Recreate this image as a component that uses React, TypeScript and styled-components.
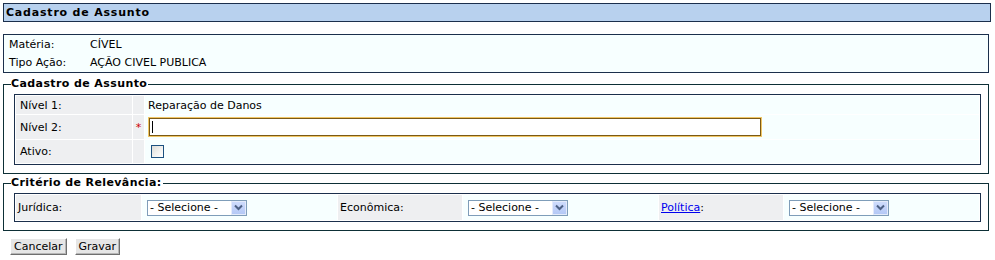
import React from 'react';
import styled, { createGlobalStyle } from 'styled-components';

const GlobalStyle = createGlobalStyle`
  body {
    margin: 0;
    background: #ffffff;
    font-family: 'DejaVu Sans', Verdana, sans-serif;
    font-size: 11px;
    color: #000000;
  }
`;

const Page = styled.div`
  padding: 3px 0 0 3px;
`;

const TitleBar = styled.div`
  box-sizing: border-box;
  width: 988px;
  height: 19px;
  border: 1px solid #1b2f4c;
  background: #b8d1ee;
  padding-left: 2px;
  font-weight: bold;
  letter-spacing: 0.8px;
  line-height: 17px;
`;

const InfoBox = styled.div`
  box-sizing: border-box;
  width: 986px;
  height: 39px;
  margin-top: 12px;
  border: 1px solid #1b2f4c;
  background: #f7ffff;
  padding-left: 5px;
  display: grid;
  grid-template-columns: 81px 1fr;
  grid-auto-rows: 18px;
  align-items: center;
`;

const FieldSet = styled.fieldset<{ $gap: number }>`
  box-sizing: border-box;
  width: 986px;
  margin: ${(p) => p.$gap}px 0 0 0;
  padding: 3px 7px 8px 10px;
  border: 1px solid #0d2f36;
  min-inline-size: 0;
`;

const Legend = styled.legend`
  margin-left: -3px;
  padding: 0 1px 0 0;
  font-weight: bold;
  letter-spacing: 0.4px;
  line-height: 14px;
`;

const FormTable = styled.div<{ $cols: string; $rows: string }>`
  display: grid;
  grid-template-columns: ${(p) => p.$cols};
  grid-template-rows: ${(p) => p.$rows};
  gap: 1px;
  padding: 1px;
  border: 1px solid #1b2f4c;
  background: #ffffff;
`;

const LabelCell = styled.div<{ $pad?: number }>`
  background: #eeeff1;
  display: flex;
  align-items: center;
  padding-left: ${(p) => p.$pad ?? 4}px;
`;

const MarkCell = styled.div`
  background: #eeeff1;
  color: #cc0000;
  display: flex;
  align-items: center;
  justify-content: center;
  padding-top: 1px;
`;

const ValueCell = styled.div<{ $pad?: number }>`
  background: #f7ffff;
  display: flex;
  align-items: center;
  padding-left: ${(p) => p.$pad ?? 3}px;
`;

const InputWrap = styled.span`
  position: relative;
  display: inline-flex;
  margin-left: 1px;
`;

const TextInput = styled.input`
  box-sizing: border-box;
  width: 612px;
  height: 18px;
  margin: 0;
  padding: 0 2px;
  border: 1px solid #7b5a16;
  box-shadow: 0 0 0 1px #f1c666;
  background: #ffffff;
  font: inherit;
  outline: none;
  caret-color: transparent;
`;

const Caret = styled.span`
  position: absolute;
  left: 3px;
  top: 3px;
  width: 1px;
  height: 12px;
  background: #000000;
  pointer-events: none;
`;

const CheckBox = styled.span`
  box-sizing: border-box;
  display: inline-block;
  width: 13px;
  height: 13px;
  margin-left: 3px;
  border: 1px solid #1c5180;
  background: linear-gradient(135deg, #dcdcd7 0%, #f4f4f2 60%, #ffffff 100%);
`;

const SelectBox = styled.div`
  box-sizing: border-box;
  width: 100px;
  height: 16px;
  margin-left: 2px;
  border: 1px solid #7f9db9;
  background: #ffffff;
  display: flex;
  align-items: center;
  justify-content: space-between;
  padding-left: 2px;
`;

const SelectArrow = styled.span`
  box-sizing: border-box;
  width: 15px;
  height: 14px;
  background: linear-gradient(#cedbfc, #b4c8f6);
  border: 1px solid #e4ebfb;
  display: flex;
  align-items: center;
  justify-content: center;
`;

const Link = styled.a`
  color: #0000ee;
  text-decoration: underline;
`;

const Buttons = styled.div`
  display: flex;
  gap: 8px;
  margin: 7px 0 0 7px;
`;

const Button = styled.button`
  box-sizing: border-box;
  height: 17px;
  padding: 0 3px;
  font: inherit;
  line-height: 13px;
  background: #e6e6e6;
  border: 1px solid;
  border-color: #ffffff #6f6f6f #6f6f6f #ffffff;
  box-shadow: inset -1px -1px 0 #b6b6b6;
  color: #000000;
`;

const Select = () => (
  <SelectBox>
    <span>- Selecione -</span>
    <SelectArrow>
      <svg width="9" height="7" viewBox="0 0 9 7">
        <polyline points="1,1.5 4.5,5 8,1.5" fill="none" stroke="#4d6185" strokeWidth="2" />
      </svg>
    </SelectArrow>
  </SelectBox>
);

const App = () => {
  return (
    <Page>
      <GlobalStyle />
      <TitleBar>Cadastro de Assunto</TitleBar>

      <InfoBox>
        <span>Matéria:</span>
        <span>CÍVEL</span>
        <span>Tipo Ação:</span>
        <span>AÇÃO CIVEL PUBLICA</span>
      </InfoBox>

      <FieldSet $gap={4}>
        <Legend>Cadastro de Assunto</Legend>
        <FormTable $cols="116px 11px 1fr" $rows="18px 24px 23px">
          <LabelCell>Nível 1:</LabelCell>
          <MarkCell />
          <ValueCell>Reparação de Danos</ValueCell>

          <LabelCell>Nível 2:</LabelCell>
          <MarkCell>*</MarkCell>
          <ValueCell>
            <InputWrap>
              <TextInput type="text" />
              <Caret />
            </InputWrap>
          </ValueCell>

          <LabelCell>Ativo:</LabelCell>
          <MarkCell />
          <ValueCell>
            <CheckBox />
          </ValueCell>
        </FormTable>
      </FieldSet>

      <FieldSet $gap={2}>
        <Legend>Critério de Relevância:</Legend>
        <FormTable $cols="125px 1fr 124px 1fr 124px 1fr" $rows="25px">
          <LabelCell $pad={2}>Jurídica:</LabelCell>
          <ValueCell>
            <Select />
          </ValueCell>
          <LabelCell $pad={2}>Econômica:</LabelCell>
          <ValueCell>
            <Select />
          </ValueCell>
          <LabelCell $pad={2}>
            <Link href="#">Política</Link>:
          </LabelCell>
          <ValueCell>
            <Select />
          </ValueCell>
        </FormTable>
      </FieldSet>

      <Buttons>
        <Button>Cancelar</Button>
        <Button>Gravar</Button>
      </Buttons>
    </Page>
  );
};

export default App;
